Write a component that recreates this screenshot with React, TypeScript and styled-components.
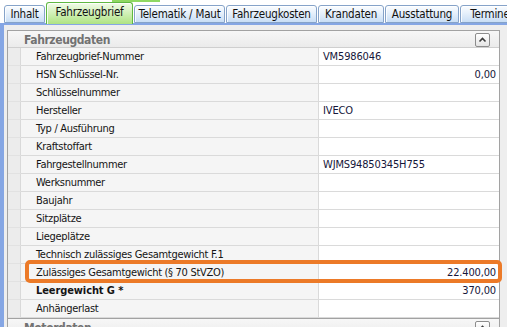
import React from "react";
import styled, { createGlobalStyle } from "styled-components";

const Global = createGlobalStyle`
  html, body { margin: 0; padding: 0; background: #ffffff; }
  body { font-family: "DejaVu Sans Condensed", "DejaVu Sans", Tahoma, sans-serif; }
  * { box-sizing: border-box; }
`;

const Page = styled.div`
  width: 507px;
  height: 327px;
  overflow: hidden;
  display: flex;
  flex-direction: column;
  background: #ffffff;
`;

const TopStrip = styled.div`
  height: 2px;
  display: flex;
  padding-left: 112px;
`;

const GreenSeg = styled.div`
  width: 48px;
  height: 2px;
  background: #8fd862;
`;

const TabBar = styled.div`
  height: 21px;
  display: flex;
  align-items: flex-start;
  gap: 1px;
  padding-left: 4px;
  position: relative;
  z-index: 1;
`;

const Tab = styled.div<{ $w: number; $active?: boolean }>`
  flex: 0 0 ${(p) => p.$w}px;
  width: ${(p) => p.$w}px;
  height: ${(p) => (p.$active ? 22 : 18)}px;
  margin-top: ${(p) => (p.$active ? 0 : 3)}px;
  display: flex;
  align-items: center;
  justify-content: center;
  padding-bottom: ${(p) => (p.$active ? 3 : 0)}px;
  font-size: 11.5px;
  letter-spacing: -0.2px;
  color: #111111;
  white-space: nowrap;
  overflow: hidden;
  border: 1px solid ${(p) => (p.$active ? "#5fb842" : "#86a3c9")};
  border-bottom: ${(p) => (p.$active ? "none" : "1px solid #86a3c9")};
  border-radius: 3px 3px 0 0;
  background: ${(p) =>
    p.$active
      ? "linear-gradient(#f1fbe8 0%, #d3f1bb 45%, #aee382 100%)"
      : "linear-gradient(#fbfdff 0%, #e6f0fb 45%, #c9def5 100%)"};
  box-shadow: inset 1px 1px 0 rgba(255, 255, 255, 0.8);
`;

const BlueLine = styled.div`
  height: 2px;
  background: #85a6e4;
`;

const Body = styled.div`
  flex: 1;
  display: flex;
  min-height: 0;
`;

const LeftBar = styled.div`
  flex: 0 0 4px;
  background: #85a6e4;
`;

const Main = styled.div`
  flex: 1;
  background: #eeeeee;
  padding: 5px 0 0 3px;
  display: flex;
  flex-direction: column;
  overflow: hidden;
`;

const Group = styled.div<{ $first?: boolean }>`
  width: 493px;
  border: 1px solid #a2a2a2;
  border-top: ${(p) => (p.$first ? "1px solid #a2a2a2" : "none")};
  background: #ffffff;
  flex-shrink: 0;
`;

const GroupHeader = styled.div`
  height: 17px;
  display: flex;
  align-items: flex-start;
  justify-content: space-between;
  padding: 2px 9px 0 16px;
  background: linear-gradient(#f7f7f7, #ebebeb);
  border-bottom: 1px solid #cfcfcf;
`;

const GroupTitle = styled.span`
  font-size: 12px;
  font-weight: bold;
  letter-spacing: -0.4px;
  color: #727272;
  line-height: 15px;
`;

const CollapseButton = styled.div`
  width: 15px;
  height: 14px;
  border: 1px solid #8c8c8c;
  border-radius: 2px;
  background: linear-gradient(#ffffff, #e4e4e4);
  display: flex;
  align-items: center;
  justify-content: center;
`;

const Row = styled.div`
  position: relative;
  display: grid;
  grid-template-columns: 13px 298px 1fr;
  height: 18px;
`;

const Indent = styled.div`
  background: #ececec;
  border-right: 1px solid #d9d9d9;
  border-bottom: 1px solid #e2e2e2;
`;

const Label = styled.div<{ $bold?: boolean }>`
  background: #f5f5f5;
  border-right: 1px solid #dadada;
  border-bottom: 1px solid #dadada;
  padding-left: 15px;
  font-size: 11px;
  letter-spacing: ${(p) => (p.$bold ? "-0.1px" : "-0.3px")};
  font-weight: ${(p) => (p.$bold ? "bold" : "normal")};
  line-height: 17px;
  color: #141414;
  white-space: nowrap;
  overflow: hidden;
`;

const Value = styled.div<{ $right?: boolean }>`
  background: #ffffff;
  border-bottom: 1px solid #dadada;
  padding: 0 3px 0 4px;
  font-size: 11px;
  letter-spacing: -0.15px;
  line-height: 17px;
  color: #16163a;
  text-align: ${(p) => (p.$right ? "right" : "left")};
  white-space: nowrap;
  overflow: hidden;
`;

const Highlight = styled.div`
  position: absolute;
  left: 17px;
  right: -3px;
  top: -4px;
  bottom: -1px;
  border: 4px solid #ec7a28;
  border-radius: 5px;
  pointer-events: none;
  z-index: 2;
`;

const CaretUp = () => (
  <svg width="9" height="6" viewBox="0 0 9 6">
    <path d="M1.5 4.5 L4.5 1.5 L7.5 4.5" fill="none" stroke="#3c3c3c" strokeWidth="1.6" />
  </svg>
);

type Field = { label: string; value?: string; right?: boolean; bold?: boolean; mark?: boolean };

const fields: Field[] = [
  { label: "Fahrzeugbrief-Nummer", value: "VM5986046" },
  { label: "HSN Schlüssel-Nr.", value: "0,00", right: true },
  { label: "Schlüsselnummer" },
  { label: "Hersteller", value: "IVECO" },
  { label: "Typ / Ausführung" },
  { label: "Kraftstoffart" },
  { label: "Fahrgestellnummer", value: "WJMS94850345H755" },
  { label: "Werksnummer" },
  { label: "Baujahr" },
  { label: "Sitzplätze" },
  { label: "Liegeplätze" },
  { label: "Technisch zulässiges Gesamtgewicht F.1" },
  { label: "Zulässiges Gesamtgewicht (§ 70 StVZO)", value: "22.400,00", right: true, mark: true },
  { label: "Leergewicht G *", value: "370,00", right: true, bold: true },
  { label: "Anhängerlast" },
];

const tabs = [
  { label: "Inhalt", w: 41 },
  { label: "Fahrzeugbrief", w: 87, active: true },
  { label: "Telematik / Maut", w: 91 },
  { label: "Fahrzeugkosten", w: 91 },
  { label: "Krandaten", w: 66 },
  { label: "Ausstattung", w: 74 },
  { label: "Termine", w: 60 },
];

export default function App() {
  return (
    <Page>
      <Global />
      <TopStrip>
        <GreenSeg />
      </TopStrip>
      <TabBar>
        {tabs.map((t) => (
          <Tab key={t.label} $w={t.w} $active={t.active}>
            {t.label}
          </Tab>
        ))}
      </TabBar>
      <BlueLine />
      <Body>
        <LeftBar />
        <Main>
          <Group $first>
            <GroupHeader>
              <GroupTitle>Fahrzeugdaten</GroupTitle>
              <CollapseButton>
                <CaretUp />
              </CollapseButton>
            </GroupHeader>
            {fields.map((f) => (
              <Row key={f.label}>
                <Indent />
                <Label $bold={f.bold}>{f.label}</Label>
                <Value $right={f.right}>{f.value ?? ""}</Value>
                {f.mark && <Highlight />}
              </Row>
            ))}
          </Group>
          <Group>
            <GroupHeader>
              <GroupTitle>Motordaten</GroupTitle>
              <CollapseButton>
                <CaretUp />
              </CollapseButton>
            </GroupHeader>
          </Group>
        </Main>
      </Body>
    </Page>
  );
}
